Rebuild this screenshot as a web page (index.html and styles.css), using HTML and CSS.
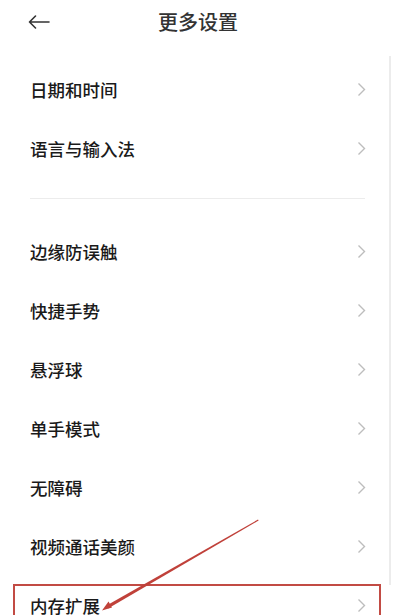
FILE: index.html
```html
<!DOCTYPE html>
<html lang="zh-CN">
<head>
<meta charset="utf-8">
<link rel="stylesheet" href="styles.css">
<title>更多设置</title>
</head>
<body>
<div class="page">
  <header class="topbar">
    <svg class="back" width="22" height="14" viewBox="0 0 22 14"><path d="M21 7H1.5M7.5 1L1.5 7l6 6" fill="none" stroke="#333" stroke-width="1.6" stroke-linecap="round" stroke-linejoin="round"/></svg>
    <h1 class="title">更多设置</h1>
  </header>
  <ul class="group group-first">
    <li class="row"><span class="label">日期和时间</span><svg class="chev" width="9" height="15" viewBox="0 0 9 15"><path d="M1.5 1.5l6 6-6 6" fill="none" stroke="#bdbdbd" stroke-width="1.4"/></svg></li>
    <li class="row"><span class="label">语言与输入法</span><svg class="chev" width="9" height="15" viewBox="0 0 9 15"><path d="M1.5 1.5l6 6-6 6" fill="none" stroke="#bdbdbd" stroke-width="1.4"/></svg></li>
  </ul>
  <div class="divider"></div>
  <ul class="group">
    <li class="row"><span class="label">边缘防误触</span><svg class="chev" width="9" height="15" viewBox="0 0 9 15"><path d="M1.5 1.5l6 6-6 6" fill="none" stroke="#bdbdbd" stroke-width="1.4"/></svg></li>
    <li class="row"><span class="label">快捷手势</span><svg class="chev" width="9" height="15" viewBox="0 0 9 15"><path d="M1.5 1.5l6 6-6 6" fill="none" stroke="#bdbdbd" stroke-width="1.4"/></svg></li>
    <li class="row"><span class="label">悬浮球</span><svg class="chev" width="9" height="15" viewBox="0 0 9 15"><path d="M1.5 1.5l6 6-6 6" fill="none" stroke="#bdbdbd" stroke-width="1.4"/></svg></li>
    <li class="row"><span class="label">单手模式</span><svg class="chev" width="9" height="15" viewBox="0 0 9 15"><path d="M1.5 1.5l6 6-6 6" fill="none" stroke="#bdbdbd" stroke-width="1.4"/></svg></li>
    <li class="row"><span class="label">无障碍</span><svg class="chev" width="9" height="15" viewBox="0 0 9 15"><path d="M1.5 1.5l6 6-6 6" fill="none" stroke="#bdbdbd" stroke-width="1.4"/></svg></li>
    <li class="row"><span class="label">视频通话美颜</span><svg class="chev" width="9" height="15" viewBox="0 0 9 15"><path d="M1.5 1.5l6 6-6 6" fill="none" stroke="#bdbdbd" stroke-width="1.4"/></svg></li>
    <li class="row row-marked"><span class="label">内存扩展</span><svg class="chev" width="9" height="15" viewBox="0 0 9 15"><path d="M1.5 1.5l6 6-6 6" fill="none" stroke="#bdbdbd" stroke-width="1.4"/></svg><span class="mark-box"></span></li>
  </ul>
  <div class="scrollbar"></div>
  <svg class="pointer" width="394" height="615" viewBox="0 0 394 615">
    <polygon points="258,519.5 258.6,520.6 108,608.5 106.6,605.5" fill="#c0413a"/>
    <polygon points="102,610.5 108.5,601.5 112,607.5" fill="#c0413a"/>
  </svg>
</div>
</body>
</html>
```

FILE: styles.css
```css
* { box-sizing: border-box; }
html, body { margin: 0; padding: 0; background: #fff; }
body {
  font-family: "Noto Sans CJK SC", "Noto Sans", sans-serif;
  color: #1a1a1a;
  width: 394px;
  height: 615px;
  overflow: hidden;
}
.page { position: relative; width: 394px; height: 615px; }
.topbar {
  height: 44px;
  display: flex;
  align-items: center;
  padding-left: 28px;
}
.back { flex: none; margin-top: 0; }
.title {
  margin: 0 0 0 108px;
  font-size: 20px;
  font-weight: 500;
  color: #333;
  line-height: 1;
  letter-spacing: 0;
}
.group { list-style: none; margin: 0; padding: 0; }
.group-first { margin-top: 16px; }
.row {
  position: relative;
  height: 59px;
  display: flex;
  align-items: center;
  justify-content: space-between;
  padding: 0 28px 0 30px;
}
.label {
  font-size: 17.5px;
  font-weight: 500;
  line-height: 1;
}
.chev { flex: none; }
.divider {
  height: 1px;
  background: #ececec;
  margin: 20px 29px 23px 30px;
}
.mark-box {
  position: absolute;
  left: 13px;
  top: 8px;
  width: 368px;
  height: 60px;
  border: 2px solid #c24b44;
}
.scrollbar {
  position: absolute;
  left: 389px;
  top: 56px;
  width: 2px;
  height: 529px;
  background: #ececec;
}
.pointer { position: absolute; left: 0; top: 0; pointer-events: none; }
```
